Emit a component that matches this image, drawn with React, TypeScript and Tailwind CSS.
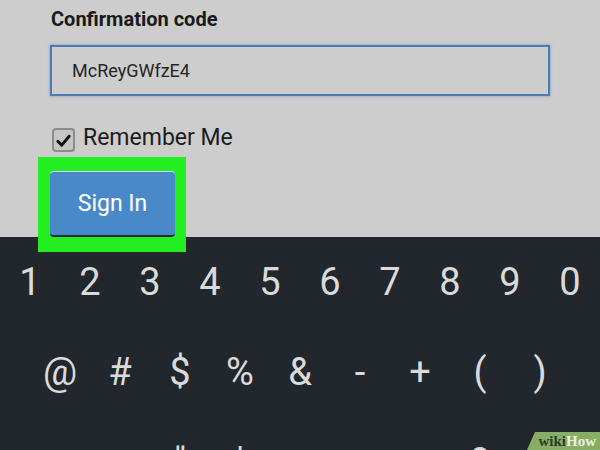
import React from "react";

const digits = ["1", "2", "3", "4", "5", "6", "7", "8", "9", "0"];
const symbols = ["@", "#", "$", "%", "&", "-", "+", "(", ")"];
const lastRow = ["", "", "\"", "'", "", "", "", "?", ""];

export default function App() {
  return (
    <div className="w-[600px] h-[450px] overflow-hidden flex flex-col bg-[#cdcdcd] font-['Roboto',sans-serif]">
      {/* Sign-in form */}
      <div className="h-[237px] shrink-0 pl-[50px] pt-[5px] flex flex-col">
        <label className="text-[20px] font-bold text-[#1a1a1a] leading-[28px] pl-[1px]">
          Confirmation code
        </label>
        <div className="mt-[12px] w-[500px] h-[51px] border-2 border-[#4a7bb2] shadow-[0_0_3px_rgba(74,123,178,0.6)] flex items-center pl-[20px]">
          <span className="text-[18px] text-[#262626]">McReyGWfzE4</span>
        </div>

        <div className="mt-[32px] flex items-center gap-[8px] pl-[2px]">
          <div className="w-[23px] h-[24px] rounded-[4px] border-2 border-[#8c8c8c] bg-[#c6c6c6] flex items-center justify-center">
            <svg viewBox="0 0 24 24" className="w-[17px] h-[17px]">
              <path
                d="M4 13 L9.5 18.5 L20 6"
                fill="none"
                stroke="#111"
                strokeWidth="4.2"
                strokeLinecap="round"
                strokeLinejoin="round"
              />
            </svg>
          </div>
          <span className="text-[23px] text-[#1c1c1c] leading-[26px] -mt-[4px]">Remember Me</span>
        </div>

        <div className="relative mt-[19px] w-[125px]">
          {/* highlight frame */}
          <div className="absolute left-[-12px] right-[-11px] top-[-14px] bottom-[-15px] bg-[#22ee22] z-10" />
          <button className="relative z-20 w-[125px] h-[66px] rounded-[4px] bg-[#4a89c9] border-t border-t-white/80 border-b-2 border-b-[#1d2a36] text-white text-[23px] leading-none">
            Sign In
          </button>
        </div>
      </div>

      {/* Keyboard */}
      <div className="relative flex-1 min-h-0 overflow-hidden bg-[#21272c] text-[#dadada] text-[38px]">
        <div className="flex h-[90px] leading-[90px]">
          {digits.map((d) => (
            <div key={d} className="w-[60px] text-center">
              {d}
            </div>
          ))}
        </div>
        <div className="flex h-[90px] leading-[90px] pl-[30px]">
          {symbols.map((s) => (
            <div key={s} className="w-[60px] text-center">
              {s}
            </div>
          ))}
        </div>
        <div className="flex h-[90px] leading-[90px] pl-[30px]">
          {lastRow.map((s, i) => (
            <div key={i} className="w-[60px] text-center">
              {s}
            </div>
          ))}
        </div>

        {/* watermark */}
        <div className="absolute right-0 bottom-0 w-[73px] h-[18px] bg-[#88ae66] [clip-path:polygon(11%_0,100%_0,100%_100%,0_100%)] flex items-center justify-end pr-[4px]">
          <span className="font-['Liberation_Serif',serif] font-bold text-[15px] leading-none text-[#2b3a29]">
            wiki<span className="text-[#e8efe2]">How</span>
          </span>
        </div>
      </div>
    </div>
  );
}
